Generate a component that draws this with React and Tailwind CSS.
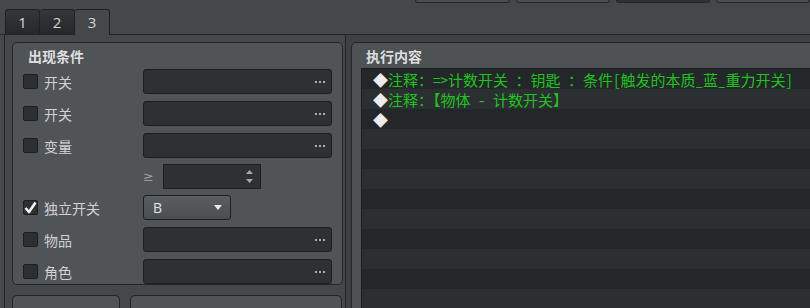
import React from "react";

const UI_FONT = { fontFamily: "'Noto Sans CJK SC', 'Noto Sans', sans-serif" };
const LIST_FONT = {
  fontFamily: "'Noto Sans Mono CJK SC', 'Noto Sans CJK SC', 'DejaVu Sans Mono', monospace",
};

function Check({ on }) {
  return (
    <div className="w-[15px] h-[15px] rounded-[2px] border border-[#1c1e20] bg-[#2d3033] flex items-center justify-center shrink-0">
      {on && (
        <svg width="13" height="13" viewBox="0 0 13 13">
          <path d="M1.5 7 L5 11 L11.5 1.5" fill="none" stroke="#f2f2f2" strokeWidth="2.6" strokeLinejoin="round" />
        </svg>
      )}
    </div>
  );
}

function Dots() {
  return (
    <div className="flex gap-[2px] mr-[6px]">
      <div className="w-[2px] h-[2px] bg-[#a9abad]" />
      <div className="w-[2px] h-[2px] bg-[#a9abad]" />
      <div className="w-[2px] h-[2px] bg-[#a9abad]" />
    </div>
  );
}

function Field() {
  return (
    <div className="w-[189px] h-[25px] rounded-[3px] border border-[#1c1e20] bg-[#2e3134] flex items-center justify-end">
      <Dots />
    </div>
  );
}

function Row({ label, on, mt = "mt-[7px]", children }) {
  return (
    <div className={`flex items-center h-[25px] ${mt}`}>
      <div className="w-[120px] flex items-center gap-[6px]">
        <Check on={on} />
        <span className="text-[14px] text-[#cfd1d2] leading-none">{label}</span>
      </div>
      {children}
    </div>
  );
}

const lines = [
  "注释：=>计数开关 ：钥匙 ：条件[触发的本质_蓝_重力开关]",
  "注释：【物体 - 计数开关】",
  "",
];

export default function App() {
  const rows = Array.from({ length: 12 });
  return (
    <div className="w-[810px] h-[308px] overflow-hidden bg-[#45484b] flex flex-col" style={UI_FONT}>
      {/* top buttons (cut off) */}
      <div className="h-[9px] flex items-start pl-[415px] gap-[6px] shrink-0">
        <div className="w-[99px] h-[3px] border border-t-0 border-[#25282a] rounded-b-[3px] bg-[#4a4d50]" />
        <div className="w-[98px] h-[3px] border border-t-0 border-[#25282a] rounded-b-[3px] bg-[#4a4d50]" />
        <div className="w-[98px] h-[3px] border border-t-0 border-[#25282a] rounded-b-[3px] bg-[#2f3234]" />
        <div className="w-[98px] h-[3px] border border-t-0 border-[#25282a] rounded-b-[3px] bg-[#4a4d50]" />
      </div>

      {/* tabs */}
      <div className="h-[26px] flex items-end pl-[5px] border-b border-[#222426] shrink-0">
        <div className="w-[35px] h-[25px] border border-b-0 border-[#1e2022] rounded-t-[3px] bg-gradient-to-b from-[#34373a] to-[#26292b] flex items-center justify-center text-[15px] text-[#d4d6d8]" style={{ fontFamily: "'Open Sans', sans-serif" }}>1</div>
        <div className="w-[35px] h-[25px] border border-b-0 border-l-0 border-[#1e2022] rounded-t-[3px] bg-gradient-to-b from-[#34373a] to-[#26292b] flex items-center justify-center text-[15px] text-[#d4d6d8]" style={{ fontFamily: "'Open Sans', sans-serif" }}>2</div>
        <div className="w-[35px] h-[26px] -mb-[1px] border border-b-0 border-l-0 border-[#1e2022] rounded-t-[3px] bg-[#45484b] flex items-center justify-center text-[15px] text-[#d4d6d8]" style={{ fontFamily: "'Open Sans', sans-serif" }}>3</div>
      </div>

      <div className="flex flex-1 min-h-0">
        {/* tab pane */}
        <div className="ml-[4px] w-[342px] border-l border-r border-[#222426] pl-[7px] pt-[7px] flex flex-col shrink-0">
          <div className="w-[331px] h-[252px] rounded-[5px] border border-[#222426] bg-[#505457] pl-[10px] flex flex-col">
            <div className="h-[26px] flex items-center pl-[5px] text-[14px] font-bold text-[#dcdedf] leading-none">出现条件</div>
            <Row label="开关" mt="mt-0"><Field /></Row>
            <Row label="开关"><Field /></Row>
            <Row label="变量"><Field /></Row>
            <div className="flex items-center h-[25px] mt-[6px] pl-[120px]">
              <span className="w-[20px] text-[13px] text-[#9a9c9e] leading-none" style={{ fontFamily: "'DejaVu Sans', sans-serif" }}>≥</span>
              <div className="w-[98px] h-[25px] border border-[#1c1e20] bg-[#2e3134] flex items-center justify-end pr-[6px]">
                <svg width="9" height="17" viewBox="0 0 9 17">
                  <path d="M1 6 L4.5 2 L8 6 Z" fill="#a5a7a9" />
                  <path d="M1 11 L4.5 15 L8 11 Z" fill="#a5a7a9" />
                </svg>
              </div>
            </div>
            <Row label="独立开关" on mt="mt-[6px]">
              <div className="w-[88px] h-[25px] rounded-[3px] border border-[#1c1e20] bg-gradient-to-b from-[#5a5e61] to-[#4a4e51] flex items-center justify-between pl-[9px] pr-[8px]">
                <span className="text-[14px] text-[#e2e4e5] leading-none" style={{ fontFamily: "'Open Sans', sans-serif" }}>B</span>
                <svg width="8" height="5" viewBox="0 0 8 5"><path d="M0 0 L8 0 L4 5 Z" fill="#e8e8e8" /></svg>
              </div>
            </Row>
            <Row label="物品"><Field /></Row>
            <Row label="角色"><Field /></Row>
          </div>
          <div className="flex gap-[10px] mt-[10px]">
            <div className="w-[108px] h-[20px] rounded-t-[5px] border border-b-0 border-[#222426] bg-[#505457]" />
            <div className="w-[212px] h-[20px] rounded-t-[5px] border border-b-0 border-[#222426] bg-[#505457]" />
          </div>
        </div>

        {/* execution content */}
        <div className="flex-1 bg-[#3e4144] pl-[5px] pt-[7px] min-w-0">
          <div className="w-[480px] h-[300px] rounded-[5px] border border-[#222426] bg-[#4e5255] pl-[9px] flex flex-col">
            <div className="h-[25px] flex items-center pl-[5px] text-[14px] font-bold text-[#dcdedf] leading-none">执行内容</div>
            <div className="flex-1 border-l border-t border-[#1a1c1e] bg-[#242729] flex flex-col">
              {rows.map((_, i) => (
                <div
                  key={i}
                  className={`h-[20px] shrink-0 flex items-center pl-[11px] text-[15px] leading-none whitespace-nowrap ${i % 2 === 0 ? "bg-[#242729]" : "bg-[#2c2f31]"}`}
                  style={LIST_FONT}
                >
                  {i < lines.length && (
                    <>
                      <span className="text-[#ececec]">◆</span>
                      <span className="text-[#1fc21f]">{lines[i]}</span>
                    </>
                  )}
                </div>
              ))}
            </div>
          </div>
        </div>
      </div>
    </div>
  );
}
